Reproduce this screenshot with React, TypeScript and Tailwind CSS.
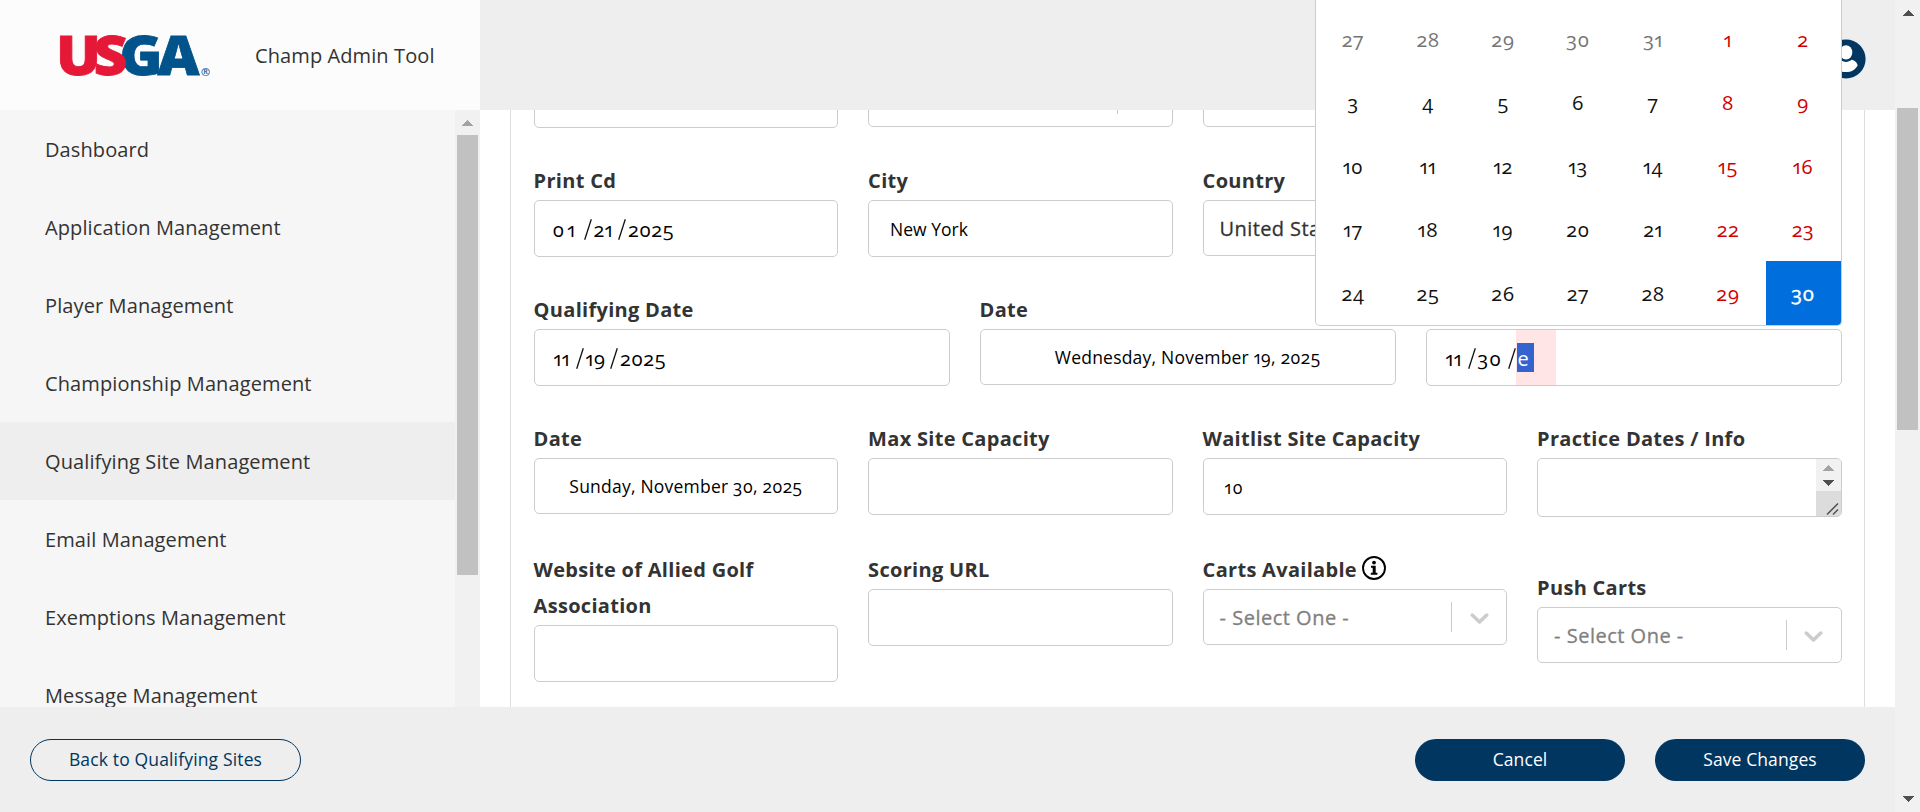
import React from "react";

const navItems = [
  "Dashboard",
  "Application Management",
  "Player Management",
  "Championship Management",
  "Qualifying Site Management",
  "Email Management",
  "Exemptions Management",
  "Message Management",
];

const ACTIVE = "Qualifying Site Management";

const weeks = [
  [27, 28, 29, 30, 31, 1, 2],
  [3, 4, 5, 6, 7, 8, 9],
  [10, 11, 12, 13, 14, 15, 16],
  [17, 18, 19, 20, 21, 22, 23],
  [24, 25, 26, 27, 28, 29, 30],
];

function Arrow({ down, className }: { down?: boolean; className: string }) {
  return (
    <svg viewBox="0 0 12 6" className={`h-1.5 w-3 shrink-0 ${className}`} fill="currentColor" shapeRendering="crispEdges">
      <path d={down ? "M0 0h12L6 6z" : "M0 6h12L6 0z"} />
    </svg>
  );
}

function Logo() {
  return (
    <svg width="154" height="46" viewBox="58 32 154 46" className="block shrink-0 overflow-visible" aria-label="USGA">
      <g fontFamily="Open Sans, sans-serif" fontWeight="800" fontSize="55">
        <text x="157.5" y="75" textLength="42" lengthAdjust="spacingAndGlyphs" fill="#00538b" stroke="#00538b" strokeWidth="0.8">A</text>
        <text x="119.5" y="75" textLength="43" lengthAdjust="spacingAndGlyphs" fill="#00538b" stroke="#00538b" strokeWidth="0.8">G</text>
        <text x="56" y="75" textLength="45" lengthAdjust="spacingAndGlyphs" fill="#e51937" stroke="#e51937" strokeWidth="0.8">U</text>
        <text x="93.5" y="75" textLength="34" lengthAdjust="spacingAndGlyphs" fill="#e51937" stroke="#e51937" strokeWidth="0.8">S</text>
      </g>
      <text x="201" y="76" fontFamily="Open Sans, sans-serif" fontWeight="600" fontSize="11" fill="#00538b">®</text>
    </svg>
  );
}

function Avatar() {
  return (
    <svg width="40" height="40" viewBox="0 0 40 40" className="block">
      <circle cx="20" cy="20" r="19.6" fill="#003660" />
      <ellipse cx="20" cy="13.4" rx="6.3" ry="7.2" fill="#fff" />
      <path d="M14.5 20.8c1.600 1.500 3.500 2.100 5.500 2.100s3.900-.6 5.500-2.100c3.200.6 5.800 2.800 6.100 5.600-2.200 4.200-6.400 6.700-11.600 6.700s-9.400-2.500-11.600-6.700c.3-2.800 2.900-5 6.100-5.600z" fill="#fff" />
    </svg>
  );
}

function InfoIcon() {
  return (
    <svg width="24" height="24" viewBox="0 0 24 24" className="block">
      <circle cx="12" cy="12" r="11" fill="none" stroke="#000" strokeWidth="1.9" />
      <circle cx="12" cy="6.6" r="1.9" fill="#000" />
      <path d="M9 9.800h4.700v7h1.700v1.900H8.800v-1.900h1.900v-5.100H9z" fill="#000" />
    </svg>
  );
}

function Field({ label, icon, className = "", children }: { label?: string; icon?: React.ReactNode; className?: string; children: React.ReactNode }) {
  return (
    <div className={className}>
      <div className="-mt-px mb-px flex min-h-9 text-xl leading-9 font-bold tracking-[0.3px] text-[#333]">
        {label && <span>{label}</span>}
        {icon && <span className="mt-1 ml-[5px]">{icon}</span>}
      </div>
      {children}
    </div>
  );
}

function Box({ className = "h-[57px]", children }: { className?: string; children?: React.ReactNode }) {
  return <div className={`flex items-center overflow-hidden rounded-[5px] border border-[#ccc] bg-white ${className}`}>{children}</div>;
}

function SelectBox({ value, placeholder }: { value?: string; placeholder?: string }) {
  return (
    <Box className="h-14">
      <div
        className={`flex-1 pt-0.5 pl-4 text-xl whitespace-nowrap [-webkit-text-stroke:0.3px_currentColor] ${value ? "tracking-[0.4px] text-[#333]" : "tracking-[0.5px] text-[#808080]"}`}
      >
        {value ?? placeholder}
      </div>
      <div className="h-[30px] w-px bg-[#ccc]" />
      <div className="flex w-[54px] justify-center">
        <svg width="31" height="31" viewBox="0 0 20 20" fill="#ccc">
          <path d="M4.516 7.548c0.436-0.446 1.043-0.481 1.576 0l3.908 3.747 3.908-3.747c0.533-0.481 1.141-0.446 1.574 0 0.436 0.445 0.408 1.197 0 1.615-0.406 0.418-4.695 4.502-4.695 4.502-0.217 0.223-0.502 0.335-0.787 0.335s-0.570-0.112-0.789-0.335c0 0-4.287-4.084-4.695-4.502s-0.436-1.170 0-1.615z" />
        </svg>
      </div>
    </Box>
  );
}

function Slash() {
  return (
    <svg width="8" height="21" viewBox="0 0 8 21" className="mt-0.5 shrink-0">
      <path d="M7.300.3L.7 20.700" stroke="#111" strokeWidth="1.300" />
    </svg>
  );
}

function DateBox({ month, day, year, leading }: { month: string; day: string; year?: string; leading?: boolean }) {
  return (
    <Box>
      <div className={`flex h-full items-center text-xl tracking-[0.400px] text-black ${leading ? "pl-[18px]" : "pl-[19px]"}`}>
        <span className={leading ? "w-[31px] pt-0.5 tracking-[3px]" : "w-[22px] pt-0.5"}>{month}</span>
        <Slash />
        <span className={year ? "w-[26.500px] pt-0.5 pl-[2px]" : "w-8 pt-0.5 pl-[2px] tracking-[1px]"}>{day}</span>
        <Slash />
        {year ? (
          <span className="pt-0.5 pl-[2px]">{year}</span>
        ) : (
          <span className="flex h-full w-10 items-center bg-[#ffe5e5] pl-px">
            <span className="flex h-[29px] w-[17px] items-center bg-[#3462cf] pt-0.5 pl-px text-white">e</span>
          </span>
        )}
      </div>
    </Box>
  );
}

function Calendar() {
  return (
    <div className="absolute top-0 left-[1315px] flex h-[325.600px] w-[527px] flex-col justify-end overflow-hidden rounded-b-[5px] border border-t-0 border-[#ccc] bg-white">
      {weeks.map((week, r) => (
        <div key={r} className="grid h-[63.500px] shrink-0 grid-cols-7 text-xl tracking-[0.500px]">
          {week.map((d, c) => {
            const selected = r === 4 && c === 6;
            const tone = selected
              ? "bg-[#006edc] text-white [-webkit-text-stroke:0.4px_currentColor]"
              : c > 4
                ? "text-[#d10000]"
                : r === 0
                  ? "text-[#757575]"
                  : "text-[#111]";
            return (
              <div key={c} className={`flex items-center justify-center pt-0.5 pr-px ${tone}`}>
                {d}
              </div>
            );
          })}
        </div>
      ))}
    </div>
  );
}

export default function App() {
  return (
    <div className="relative flex h-[812px] w-[1920px] overflow-hidden bg-white font-['Open_Sans',sans-serif] [font-feature-settings:'onum','pnum']">
      <div className="flex w-[1895px] flex-col">
        <header className="flex h-[110px] shrink-0 bg-[#eee]">
          <div className="flex w-[480px] items-center bg-[#fcfcfc] pl-[58px]">
            <Logo />
            <span className="pt-0.5 pl-[43px] text-xl tracking-[0.100px] text-[#333]">Champ Admin Tool</span>
          </div>
          <div className="flex flex-1 items-center justify-end pt-[7px] pr-[29px]">
            <Avatar />
          </div>
        </header>

        <div className="flex h-[597px] shrink-0">
          <nav className="w-[455px] overflow-hidden bg-[#f6f6f6]">
            {navItems.map((item) => (
              <div
                key={item}
                className={`flex h-[78px] items-center pt-0.5 pl-[45px] text-xl tracking-[0.110px] text-[#333] ${item === ACTIVE ? "bg-[#eee]" : ""}`}
              >
                {item}
              </div>
            ))}
          </nav>
          <div className="flex w-[25px] flex-col items-center bg-[#f1f1f1]">
            <Arrow className="mt-2.5 mr-px mb-[9px] text-[#a3a3a3]" />
            <div className="h-[440px] w-[21px] bg-[#c1c1c1]" />
          </div>

          <main className="flex-1 overflow-hidden px-[30px]">
            <div className="-mt-[75px] flex h-[700px] w-[1355px] flex-col gap-9 border-x border-[#ddd] pr-[22.400px] pl-[22.600px]">
              <div className="grid grid-cols-4 gap-[30px]">
                <Field><Box /></Field>
                <Field><SelectBox /></Field>
                <Field><Box className="h-14" /></Field>
                <Field><Box className="h-14" /></Field>
              </div>

              <div className="grid grid-cols-4 gap-[30px]">
                <Field label="Print Cd"><DateBox month="01" day="21" year="2025" leading /></Field>
                <Field label="City">
                  <Box><span className="pt-0.5 pl-[21px] text-[17.500px] text-black">New York</span></Box>
                </Field>
                <Field label="Country"><SelectBox value="United States" /></Field>
                <Field><Box className="h-14" /></Field>
              </div>

              <div className="grid grid-cols-3 gap-[30px]">
                <Field label="Qualifying Date"><DateBox month="11" day="19" year="2025" /></Field>
                <Field label="Date">
                  <Box className="h-14 justify-center"><span className="text-[17.500px] tracking-[0.220px] text-black">Wednesday, November 19, 2025</span></Box>
                </Field>
                <Field><DateBox month="11" day="30" /></Field>
              </div>

              <div className="grid grid-cols-4 gap-[30px]">
                <Field label="Date">
                  <Box className="h-14 justify-center"><span className="text-[17.500px] tracking-[0.220px] text-black">Sunday, November 30, 2025</span></Box>
                </Field>
                <Field label="Max Site Capacity"><Box /></Field>
                <Field label="Waitlist Site Capacity">
                  <Box><span className="pt-0.5 pl-[21px] text-[17.500px] tracking-[1px] text-black">10</span></Box>
                </Field>
                <Field label="Practice Dates / Info">
                  <Box className="h-[59px] justify-end">
                    <div className="flex h-full w-[25px] flex-col items-center bg-[#dcdcdc]">
                      <div className="flex h-8 w-full flex-col items-center bg-[#f1f1f1]">
                        <Arrow className="mt-1.5 text-[#a3a3a3]" />
                        <Arrow down className="mt-[9px] text-[#505050]" />
                      </div>
                      <svg width="25" height="25" viewBox="0 0 25 25" stroke="#505050" strokeWidth="1.500">
                        <path d="M11 23.500L22 12.500M17 23.500l5-5" />
                      </svg>
                    </div>
                  </Box>
                </Field>
              </div>

              <div className="grid grid-cols-4 gap-[30px]">
                <Field label="Website of Allied Golf Association"><Box /></Field>
                <Field label="Scoring URL"><Box /></Field>
                <Field label="Carts Available" icon={<InfoIcon />}><SelectBox placeholder="- Select One -" /></Field>
                <Field label="Push Carts" className="pt-[18px]"><SelectBox placeholder="- Select One -" /></Field>
              </div>
            </div>
          </main>
        </div>

        <footer className="flex h-[105px] shrink-0 items-center justify-between bg-[#eee] pr-[30px] pl-[30px] text-[17.500px] tracking-[0.100px]">
          <button className="h-[42px] w-[271px] rounded-full border border-[#003660] tracking-[0.150px] text-[#003660]">Back to Qualifying Sites</button>
          <div className="flex gap-[30px] text-white">
            <button className="h-[42px] w-[210px] rounded-full bg-[#003660]">Cancel</button>
            <button className="h-[42px] w-[210px] rounded-full bg-[#003660]">Save Changes</button>
          </div>
        </footer>
      </div>

      <div className="flex w-[25px] flex-col items-center bg-[#f1f1f1]">
        <Arrow className="mt-2.5 text-[#505050]" />
        <div className="mt-[92px] h-[322px] w-[21px] bg-[#c1c1c1]" />
        <Arrow down className="mt-auto mb-2.5 text-[#505050]" />
      </div>

      <Calendar />
    </div>
  );
}
